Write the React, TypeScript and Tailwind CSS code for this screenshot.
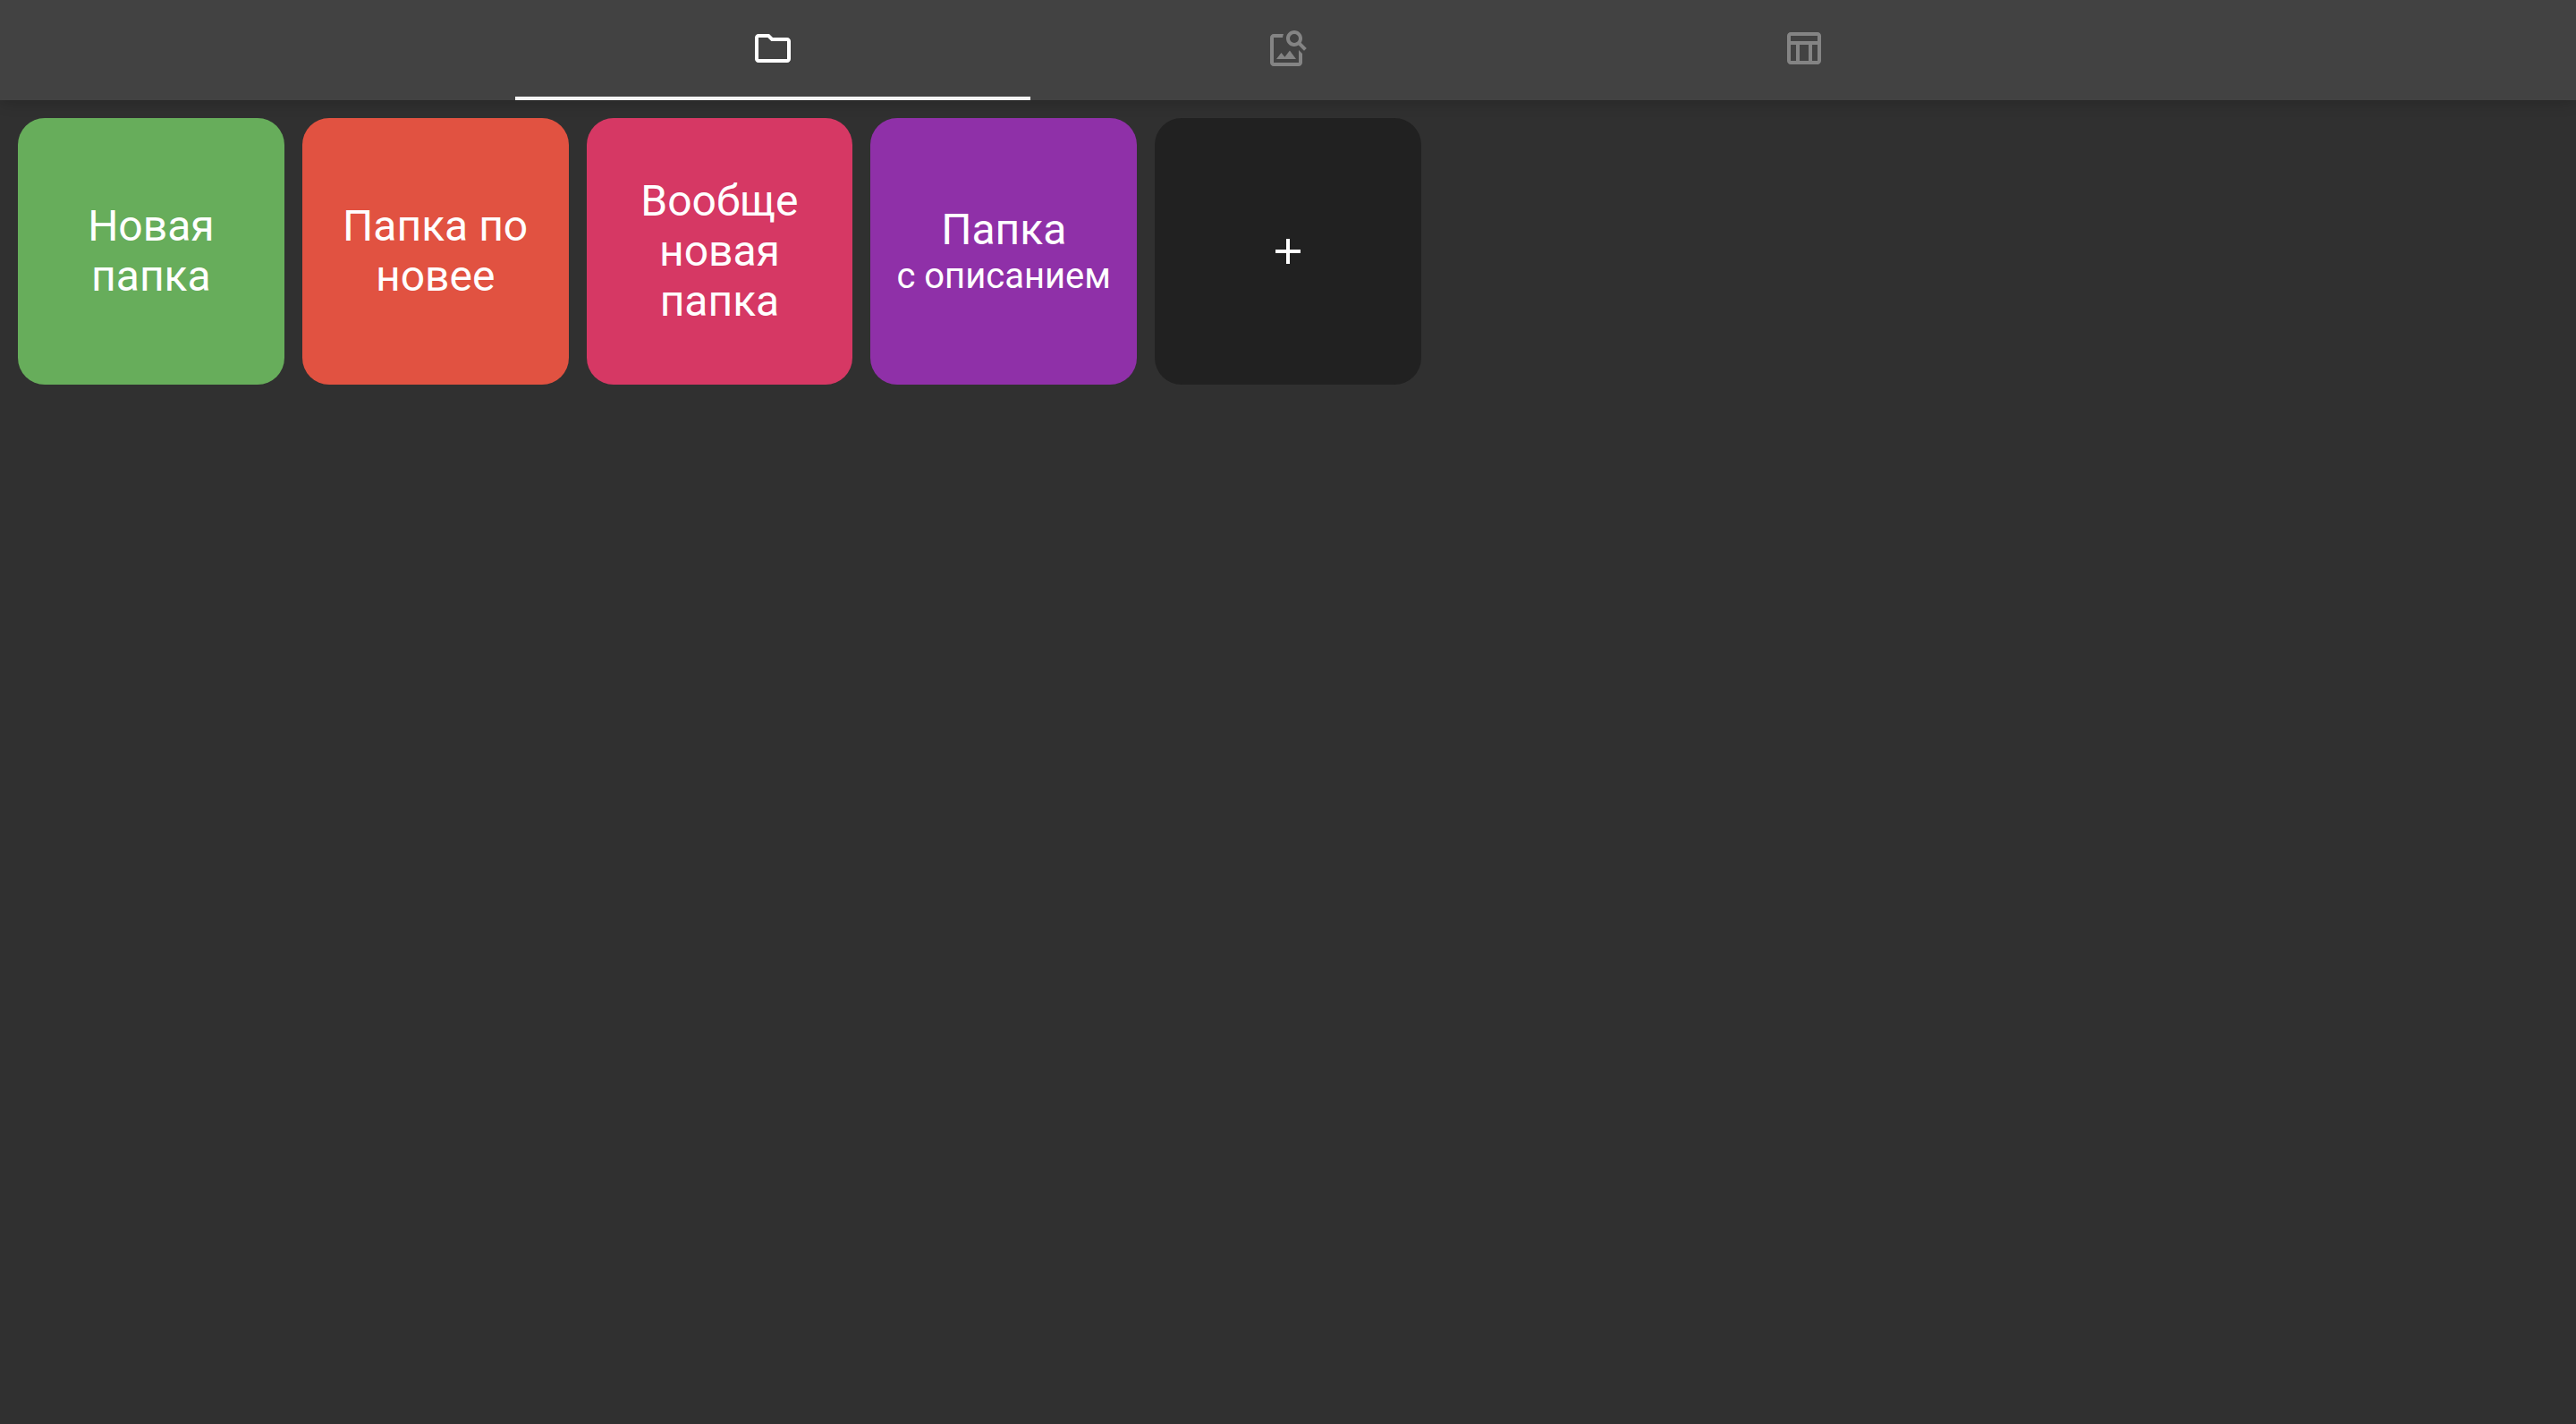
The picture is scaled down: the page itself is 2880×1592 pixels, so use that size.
import type { ReactNode } from "react";
import { MdImageSearch } from "react-icons/md";

function Icon({ d }: { d: string }) {
  return (
    <svg viewBox="0 0 24 24" fill="currentColor" className="size-12" aria-hidden="true">
      <path d={d} />
    </svg>
  );
}

const folderPath =
  "M9.17 6l2 2H20v10H4V6h5.17M10 4H4c-1.1 0-1.99.9-1.99 2L2 18c0 1.1.9 2 2 2h16c1.1 0 2-.9 2-2V8c0-1.1-.9-2-2-2h-8l-2-2z";
const tablePath =
  "M20 3H5c-1.1 0-2 .9-2 2v14c0 1.1.9 2 2 2h15c1.1 0 2-.9 2-2V5c0-1.1-.9-2-2-2zm0 2v3H5V5h15zm-5 14h-5v-9h5v9zM5 10h3v9H5v-9zm12 9v-9h3v9h-3z";
const addPath = "M19 13h-6v6h-2v-6H5v-2h6V5h2v6h6v2z";

function Tab({ label, selected = false, children }: { label: string; selected?: boolean; children: ReactNode }) {
  return (
    <button
      type="button"
      role="tab"
      aria-label={label}
      aria-selected={selected}
      className={
        selected
          ? "flex flex-1 items-center justify-center border-b-4 border-[#f5f5f5] text-white"
          : "flex flex-1 items-center justify-center border-b-4 border-transparent text-[#848484]"
      }
    >
      {children}
    </button>
  );
}

const folders = [
  { title: "Новая папка", color: "bg-[#67ad5b]" },
  { title: "Папка по новее", color: "bg-[#e15241]" },
  { title: "Вообще новая папка", color: "bg-[#d63864]" },
  { title: "Папка", description: "с описанием", color: "bg-[#8f30a8]" },
];

const tile = "flex aspect-square flex-col items-center justify-center rounded-[30px] px-5 text-center text-white";

export default function App() {
  return (
    <div className="min-h-screen bg-[#303030] font-['Roboto',sans-serif]">
      <header className="flex h-28 justify-center bg-[#424242] shadow-[0_2px_16px_rgba(0,0,0,0.2)]">
        <div role="tablist" className="flex w-3/5">
          <Tab label="Папки" selected>
            <Icon d={folderPath} />
          </Tab>
          <Tab label="Поиск изображений">
            <MdImageSearch className="size-12" />
          </Tab>
          <Tab label="Таблица">
            <Icon d={tablePath} />
          </Tab>
        </div>
      </header>
      <main className="grid grid-cols-9 gap-5 p-5">
        {folders.map((folder) => (
          <button key={folder.title} type="button" className={`${tile} ${folder.color}`}>
            <span className="text-[48px] leading-[56px]">{folder.title}</span>
            {folder.description && <span className="text-[40px] leading-[48px] whitespace-nowrap">{folder.description}</span>}
          </button>
        ))}
        <button type="button" aria-label="Добавить папку" className={`${tile} bg-[#212121]`}>
          <Icon d={addPath} />
        </button>
      </main>
    </div>
  );
}
